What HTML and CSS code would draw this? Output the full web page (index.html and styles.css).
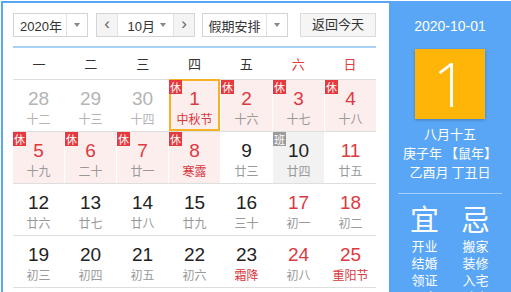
FILE: index.html
```html
<!DOCTYPE html>
<html lang="zh-CN">
<head>
<meta charset="UTF-8">
<title>万年历</title>
<link rel="stylesheet" href="styles.css">
</head>
<body>

<div class="calendar">
    <div class="main">
        <div class="toolbar">
            <div class="select year-select">
                <span class="select-text">2020年</span>
                <span class="select-arrow"></span>
            </div>
            <div class="select month-group">
                <span class="nav-btn">&lsaquo;</span>
                <span class="select-text">10月</span>
                <span class="select-arrow inline"></span>
                <span class="nav-btn right">&rsaquo;</span>
            </div>
            <div class="select holiday-select">
                <span class="select-text">假期安排</span>
                <span class="select-arrow"></span>
            </div>
            <div class="today-btn">返回今天</div>
        </div>

        <div class="weekdays">
            <span>一</span><span>二</span><span>三</span><span>四</span><span>五</span>
            <span class="red">六</span><span class="red">日</span>
        </div>

        <div class="week">
            <div class="day other"><b>28</b><i>十二</i></div>
            <div class="day other"><b>29</b><i>十三</i></div>
            <div class="day other"><b>30</b><i>十四</i></div>
            <div class="day rest selected"><em class="tag">休</em><b>1</b><i class="festival">中秋节</i></div>
            <div class="day rest"><em class="tag">休</em><b>2</b><i>十六</i></div>
            <div class="day rest"><em class="tag">休</em><b>3</b><i>十七</i></div>
            <div class="day rest"><em class="tag">休</em><b>4</b><i>十八</i></div>
        </div>
        <div class="week">
            <div class="day rest"><em class="tag">休</em><b>5</b><i>十九</i></div>
            <div class="day rest"><em class="tag">休</em><b>6</b><i>二十</i></div>
            <div class="day rest"><em class="tag">休</em><b>7</b><i>廿一</i></div>
            <div class="day rest"><em class="tag">休</em><b>8</b><i class="festival">寒露</i></div>
            <div class="day"><b>9</b><i>廿三</i></div>
            <div class="day work"><em class="tag gray">班</em><b>10</b><i>廿四</i></div>
            <div class="day weekend"><b>11</b><i>廿五</i></div>
        </div>
        <div class="week">
            <div class="day"><b>12</b><i>廿六</i></div>
            <div class="day"><b>13</b><i>廿七</i></div>
            <div class="day"><b>14</b><i>廿八</i></div>
            <div class="day"><b>15</b><i>廿九</i></div>
            <div class="day"><b>16</b><i>三十</i></div>
            <div class="day weekend"><b>17</b><i>初一</i></div>
            <div class="day weekend"><b>18</b><i>初二</i></div>
        </div>
        <div class="week last">
            <div class="day"><b>19</b><i>初三</i></div>
            <div class="day"><b>20</b><i>初四</i></div>
            <div class="day"><b>21</b><i>初五</i></div>
            <div class="day"><b>22</b><i>初六</i></div>
            <div class="day"><b>23</b><i class="festival">霜降</i></div>
            <div class="day weekend"><b>24</b><i>初八</i></div>
            <div class="day weekend"><b>25</b><i class="festival">重阳节</i></div>
        </div>
    </div>

    <div class="side">
        <div class="side-date">2020-10-01</div>
        <div class="big-day">1</div>
        <div class="lunar">八月十五</div>
        <div class="lunar">庚子年 【鼠年】</div>
        <div class="lunar">乙酉月 丁丑日</div>
        <div class="divider"></div>
        <div class="advice">
            <div class="advice-col">
                <div class="advice-title">宜</div>
                <div>开业</div>
                <div>结婚</div>
                <div>领证</div>
                <div>开市</div>
            </div>
            <div class="advice-col">
                <div class="advice-title">忌</div>
                <div>搬家</div>
                <div>装修</div>
                <div>入宅</div>
                <div>动土</div>
            </div>
        </div>
    </div>
</div>

</body>
</html>
```

FILE: styles.css
```css
/* calendar widget */
body {
    margin: 0;
    font-family: "Liberation Sans", "Noto Sans CJK SC", sans-serif;
    color: #333;
    background: #fff;
}
.calendar {
    display: flex;
    margin: 1px 0 0 1px;
    border: 2px solid #5aa6f6;
    width: 508px;
    height: 340px;
    overflow: hidden;
}
.main {
    width: 363px;
    padding: 10px 13px 0 10px;
    background: #fff;
}

/* toolbar */
.toolbar {
    display: flex;
    height: 24px;
    padding-bottom: 9px;
    border-bottom: 2px solid #a9d0f5;
}
.select {
    display: flex;
    align-items: center;
    height: 22px;
    border: 1px solid #d4d4d4;
    font-size: 13px;
}
.select-text {
    flex: 1;
    text-align: center;
}
.select-arrow {
    width: 20px;
    height: 22px;
    border-left: 1px solid #e2e2e2;
    position: relative;
}
.select-arrow::after {
    content: "";
    position: absolute;
    left: 7px;
    top: 9px;
    border-left: 3px solid transparent;
    border-right: 3px solid transparent;
    border-top: 4px solid #888;
}
.select-arrow.inline {
    border-left: none;
    width: 16px;
}
.select-arrow.inline::after {
    left: 3px;
}
.year-select {
    width: 73px;
}
.year-select .select-text {
    padding-left: 2px;
}
.month-group {
    width: 97px;
    margin-left: 8px;
}
.month-group .select-text {
    text-align: right;
    padding-right: 2px;
}
.nav-btn {
    width: 20px;
    height: 22px;
    line-height: 20px;
    text-align: center;
    font-size: 17px;
    color: #666;
    background: #f4f4f4;
    border-right: 1px solid #e2e2e2;
}
.nav-btn.right {
    border-right: none;
    border-left: 1px solid #e2e2e2;
}
.holiday-select {
    width: 84px;
    margin-left: 7px;
}
.today-btn {
    width: 74px;
    height: 22px;
    margin-left: 12px;
    line-height: 22px;
    text-align: center;
    font-size: 13px;
    border: 1px solid #dcdcdc;
    background: #f5f5f5;
}

/* grid */
.weekdays {
    display: grid;
    grid-template-columns: repeat(7, 1fr);
    height: 31px;
    line-height: 31px;
    text-align: center;
    font-size: 13px;
    font-family: "Noto Sans CJK SC", sans-serif;
}
.red {
    color: #e03d3d;
}
.week {
    display: grid;
    grid-template-columns: repeat(7, 1fr);
    column-gap: 1px;
    height: 51px;
    border-top: 1px solid #dedede;
}
.week.last {
    border-bottom: 1px solid #dedede;
}
.day {
    position: relative;
    display: flex;
    flex-direction: column;
    align-items: center;
    padding-top: 8px;
    box-sizing: border-box;
}
.day b {
    font-weight: normal;
    font-size: 19px;
    line-height: 21px;
    color: #222;
}
.day i {
    font-style: normal;
    font-size: 12px;
    line-height: 17px;
    margin-top: 1px;
    color: #999;
    font-family: "Noto Sans CJK SC", sans-serif;
}
.day.other b {
    color: #b4b4b4;
}
.day.other i {
    color: #b4b4b4;
}
.day.rest {
    background: #fdeeee;
}
.day.rest b,
.day.weekend b {
    color: #dc3a3f;
}
.day .festival {
    color: #d8383d;
}
.day.work {
    background: #f2f2f2;
}
.day.selected {
    box-shadow: inset 0 0 0 2px #f5b226;
    margin-top: -1px;
    padding-top: 9px;
    height: 52px;
}
.tag {
    position: absolute;
    top: 0;
    left: 0;
    width: 13px;
    height: 14px;
    line-height: 14px;
    text-align: center;
    font-style: normal;
    font-size: 11px;
    color: #fff;
    background: #e5393e;
    font-family: "Noto Sans CJK SC", sans-serif;
}
.selected .tag {
    top: 1px;
}
.tag.gray {
    background: #9b9b9b;
}

/* side panel */
.side {
    width: 122px;
    flex-shrink: 0;
    background: #5aa6f6;
    color: #fff;
    text-align: center;
    font-family: "Noto Sans CJK SC", sans-serif;
}
.side-date {
    margin-top: 14px;
    font-size: 14px;
    line-height: 18px;
    font-family: "Liberation Sans", sans-serif;
}
.big-day {
    width: 70px;
    height: 70px;
    margin: 14px auto 5px;
    background: #ffb507;
    box-shadow: 0 1px 3px rgba(0, 0, 0, 0.25);
    font-family: "Open Sans", sans-serif;
    font-weight: 300;
    font-size: 60px;
    line-height: 70px;
}
.lunar {
    font-size: 13px;
    line-height: 19px;
}
.divider {
    height: 1px;
    margin: 12px 9px 6px;
    background: #a6cff9;
}
.advice {
    display: flex;
    justify-content: center;
    gap: 22px;
    font-size: 13px;
    line-height: 17px;
}
.advice-title {
    font-size: 29px;
    line-height: 36px;
    margin-bottom: 1px;
}
```
